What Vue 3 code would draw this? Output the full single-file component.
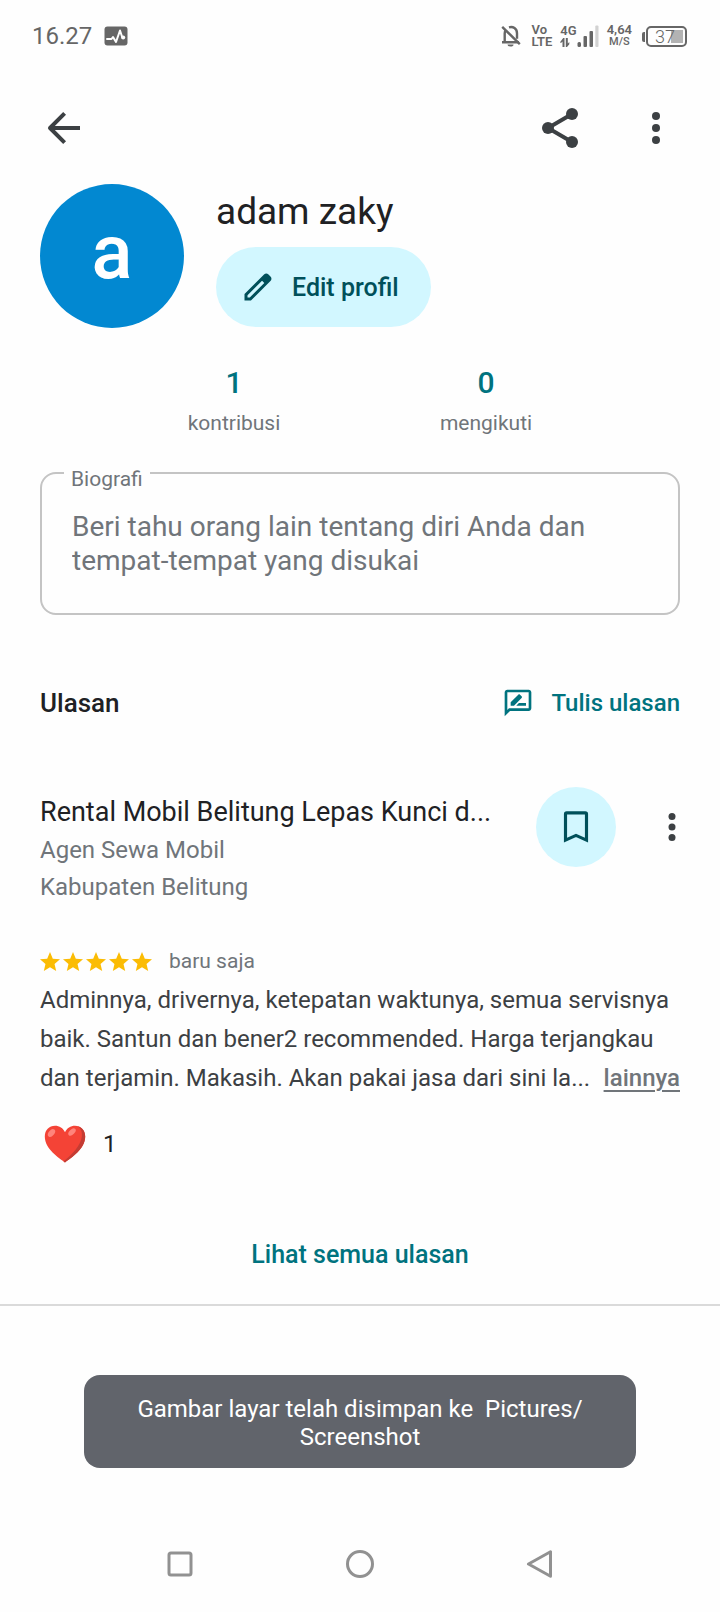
<script setup>
import { ref } from 'vue'

const bio = ref('')
const stats = [
  { value: '1', label: 'kontribusi' },
  { value: '0', label: 'mengikuti' },
]
const reviewLines = [
  'Adminnya, drivernya, ketepatan waktunya, semua servisnya',
  'baik. Santun dan bener2 recommended. Harga terjangkau',
]
</script>

<template>
  <div class="screen">
    <div class="status">
      <span class="time">16.27</span>
      <svg class="pulse" viewBox="0 0 24 20" aria-hidden="true">
        <rect x="0.5" y="0.5" width="23" height="19" rx="3" fill="#666" />
        <path d="M3 13h4.500l1.500-2 3 5 4-11.500 2.500 7.500" fill="none" stroke="#fefefe" stroke-width="2" stroke-linejoin="round" stroke-linecap="round" />
        <circle cx="19.200" cy="11.500" r="2" fill="#fefefe" />
      </svg>
      <div class="indicators">
        <svg class="bell" viewBox="0 0 20 22" aria-hidden="true">
          <path d="M1 17.200h17M3.700 17V8.500c0-1.300.400-2.500 1.100-3.500M8 2.300c4-1.200 8 1.200 8 6v5.500" fill="none" stroke="#666" stroke-width="2.400" />
          <path d="M1.200 1.800l17.600 17.400" stroke="#666" stroke-width="2.400" />
          <path d="M6.500 19.500h6a3 2 0 0 1-6 0z" fill="#666" />
        </svg>
        <div class="stack volte"><span>Vo</span><span>LTE</span></div>
        <div class="cell">
          <div class="stack net">
            <span>4G</span>
            <svg class="updown" viewBox="0 0 10 9" aria-hidden="true">
              <path d="M0 4.200L3.200 0h1.300v9H2.500V3.600L1 5zM5.800 0h2v5.400L9.300 4v2.200L7 9H5.800z" fill="#666" />
            </svg>
          </div>
          <svg class="bars" viewBox="0 0 22 22" aria-hidden="true">
            <rect x="0.500" y="17" width="3.500" height="5" rx="1.500" fill="#666" />
            <rect x="6.500" y="11" width="3.500" height="11" rx="1" fill="#666" />
            <rect x="12.500" y="6" width="3.500" height="16" rx="1" fill="#666" />
            <rect x="18.300" y="0.500" width="3.200" height="21.500" rx="1" fill="#d2d2d2" />
          </svg>
        </div>
        <div class="stack speed"><span>4,64</span><span class="unit">M/S</span></div>
        <div class="battery"><span>37</span></div>
      </div>
    </div>

    <header class="toolbar">
      <button class="icon-btn" type="button" aria-label="Kembali">
        <svg class="i48" viewBox="0 0 24 24"><path d="M20 12H5M12.300 4.700L5 12l7.300 7.300" fill="none" stroke="#3c4043" stroke-width="2" stroke-linejoin="round" /></svg>
      </button>
      <button class="icon-btn push" type="button" aria-label="Bagikan">
        <svg class="i48" viewBox="0 0 24 24" fill="#3c4043">
          <path d="M18 5L6 12l12 7" fill="none" stroke="#3c4043" stroke-width="2" />
          <circle cx="18" cy="5" r="3" /><circle cx="6" cy="12" r="3" /><circle cx="18" cy="19" r="3" />
        </svg>
      </button>
      <button class="icon-btn" type="button" aria-label="Opsi lainnya">
        <svg class="i48" viewBox="0 0 24 24" fill="#3c4043"><circle cx="12" cy="6" r="2" /><circle cx="12" cy="12" r="2" /><circle cx="12" cy="18" r="2" /></svg>
      </button>
    </header>

    <main>
      <section class="profile">
        <div class="avatar">a</div>
        <div class="who">
          <h1>adam zaky</h1>
          <button class="edit" type="button">
            <svg class="i36" viewBox="0 0 24 24" fill="#00505a" aria-hidden="true">
              <path fill-rule="evenodd" d="M3 16.700L16 3.700c.9-.9 2.100-.9 3 0l1.300 1.300c.9.9.9 2.100 0 3L7.300 21H3zM5 17.500V19h1.500L16.200 9.300l-1.500-1.500z" />
            </svg>
            <span>Edit profil</span>
          </button>
        </div>
      </section>

      <dl class="stats">
        <div v-for="s in stats" :key="s.label" class="stat">
          <dt>{{ s.label }}</dt>
          <dd>{{ s.value }}</dd>
        </div>
      </dl>

      <fieldset class="bio">
        <legend><label for="bio">Biografi</label></legend>
        <textarea id="bio" v-model="bio" rows="2" placeholder="Beri tahu orang lain tentang diri Anda dan tempat-tempat yang disukai"></textarea>
      </fieldset>

      <section class="reviews">
        <div class="reviews-head">
          <h2>Ulasan</h2>
          <button class="write" type="button">
            <svg class="i32" viewBox="0 0 24 24" fill="#00737f" aria-hidden="true">
              <path fill-rule="evenodd" d="M4 2h16c1.100 0 2 .9 2 2v12c0 1.100-.9 2-2 2H6l-4 4V4c0-1.100.9-2 2-2zm0 2v13.200L5.200 16H20V4z" />
              <path d="M6.500 14v-2.500l5.700-5.700c.4-.4.900-.4 1.300 0l1.200 1.200c.4.4.4.900 0 1.300L9 14zM10.700 14l2-2H18v2z" />
            </svg>
            <span>Tulis ulasan</span>
          </button>
        </div>

        <article>
          <div class="place">
            <div class="place-text">
              <h3>Rental Mobil Belitung Lepas Kunci d...</h3>
              <p>Agen Sewa Mobil</p>
              <p>Kabupaten Belitung</p>
            </div>
            <button class="save" type="button" aria-label="Simpan">
              <svg class="i42" viewBox="0 0 24 24"><path d="M6 4.600c0-.4.300-.7.700-.7h10.600c.4 0 .7.300.7.700v14.900l-6-2.700-6 2.700z" fill="none" stroke="#00505a" stroke-width="1.800" /></svg>
            </button>
            <button class="icon-btn more" type="button" aria-label="Opsi ulasan">
              <svg class="i42" viewBox="0 0 24 24" fill="#3c4043"><circle cx="12" cy="6" r="2" /><circle cx="12" cy="12" r="2" /><circle cx="12" cy="18" r="2" /></svg>
            </button>
          </div>

          <div class="rating">
            <div class="stars" role="img" aria-label="5 bintang">
              <svg v-for="n in 5" :key="n" viewBox="2 2 20 19" fill="#fbbc04"><path d="M12 17.270L18.180 21l-1.640-7.030L22 9.240l-7.190-.610L12 2 9.190 8.630 2 9.240l5.460 4.730L5.820 21z" /></svg>
            </div>
            <span>baru saja</span>
          </div>

          <div class="text">
            <div v-for="line in reviewLines" :key="line">{{ line }}</div>
            <div class="last">
              <span>dan terjamin. Makasih. Akan pakai jasa dari sini la...</span>
              <a href="#">lainnya</a>
            </div>
          </div>

          <button class="react" type="button">
            <svg class="heart" viewBox="0 0 42 38" aria-hidden="true">
              <path d="M21 37.500C15 33 .8 24 .8 11.500.8 5 5.200.8 11 .8c4.500 0 8 2.400 10 6.400C23 3.200 26.500.8 31 .8c5.800 0 10.200 4.200 10.200 10.700C41.200 24 27 33 21 37.500z" fill="#f44336" />
              <path d="M33.500 1.200c3.500 2 5 6 4.300 10.500C36.500 21 28 29.500 19.500 36.400l1.500 1.100C27 33 41.200 24 41.200 11.500c0-5.500-3.200-9.500-7.700-10.300z" fill="#c33c33" />
              <ellipse cx="7.500" cy="8" rx="4.500" ry="2.800" fill="#ff847b" transform="rotate(-50 7.500 8)" />
              <ellipse cx="28" cy="7" rx="4.500" ry="2.600" fill="#ff847b" transform="rotate(-45 28 7)" />
            </svg>
            <span>1</span>
          </button>
        </article>

        <a class="all" href="#">Lihat semua ulasan</a>
      </section>
    </main>

    <div class="toast" role="status">Gambar layar telah disimpan ke&nbsp; Pictures/<br>Screenshot</div>

    <nav class="sysnav">
      <button type="button" aria-label="Aplikasi terbaru"><svg viewBox="0 0 28 28"><rect x="3" y="3" width="22" height="22" rx="2" /></svg></button>
      <button type="button" aria-label="Beranda"><svg viewBox="0 0 28 28"><circle cx="14" cy="14" r="12.500" /></svg></button>
      <button type="button" aria-label="Kembali ke layar sebelumnya"><svg viewBox="0 0 28 28"><path d="M24.500 1.800v24.400L2.500 14z" /></svg></button>
    </nav>
  </div>
</template>

<style>
body { margin: 0; background: #fefefe; }
</style>

<style scoped>
.screen {
  min-height: 100vh;
  display: flex;
  flex-direction: column;
  background: #fefefe;
  color: #202124;
  font-family: Roboto, "Liberation Sans", sans-serif;
}
button {
  border: 0;
  padding: 0;
  background: none;
  font: inherit;
  color: inherit;
  display: flex;
  align-items: center;
}
h1, h2, h3, p, dl, dd { margin: 0; font-weight: 400; }
svg { display: block; flex: none; }
.i32 { width: 32px; height: 32px; }
.i36 { width: 36px; height: 36px; }
.i42 { width: 42px; height: 42px; }
.i48 { width: 48px; height: 48px; }

.status {
  display: flex;
  align-items: center;
  height: 72px;
  padding: 0 33px 0 32px;
  color: #666;
}
.time { font-size: 24px; line-height: 28px; }
.pulse { width: 24px; height: 20px; margin-left: 12px; }
.indicators { display: flex; align-items: center; gap: 8px; margin-left: auto; }
.bell { width: 20px; height: 22px; }
.stack { display: flex; flex-direction: column; font-size: 13px; font-weight: 600; line-height: 12px; }
.volte { margin-left: 3px; }
.net { gap: 1px; }
.updown { width: 10px; height: 9px; }
.cell { display: flex; align-items: center; }
.bars { width: 22px; height: 22px; }
.speed { align-items: center; }
.unit { font-size: 11px; font-weight: 500; }
.battery {
  position: relative;
  box-sizing: border-box;
  width: 41px;
  height: 21px;
  margin-left: 6px;
  padding: 0 7px;
  border: 2px solid #666;
  border-radius: 5px;
  background: linear-gradient(#b3b3b3, #b3b3b3) 23px 2px / 12px 13px no-repeat;
  font-size: 18px;
  font-weight: 300;
  line-height: 18px;
}
.battery::before {
  content: "";
  position: absolute;
  left: -6px;
  top: 4px;
  width: 3px;
  height: 10px;
  border-radius: 2px 0 0 2px;
  background: #666;
}

.toolbar { display: flex; align-items: center; gap: 48px; height: 112px; padding: 0 40px; }
.push { margin-left: auto; }

main { display: flex; flex-direction: column; padding-bottom: 25px; border-bottom: 2px solid #dadada; }
.profile { display: flex; gap: 32px; padding: 0 40px; }
.avatar {
  width: 144px;
  height: 144px;
  flex: none;
  border-radius: 50%;
  background: #0288d1;
  color: #fff;
  font-size: 76px;
  font-weight: 500;
  line-height: 136px;
  text-align: center;
}
.who { display: flex; flex-direction: column; align-items: flex-start; padding-top: 4px; }
h1 { font-size: 37px; line-height: 48px; margin-bottom: 11px; }
.edit {
  height: 80px;
  padding: 0 32px 0 24px;
  gap: 16px;
  border-radius: 40px;
  background: #d2f7ff;
  color: #00505a;
  font-size: 25px;
  font-weight: 500;
}

.stats { display: grid; grid-template-columns: 1fr 1fr; padding: 39px 15% 0; }
.stat { display: flex; flex-direction: column-reverse; align-items: center; }
dt { color: #70757a; font-size: 21px; line-height: 32px; margin-top: 8px; }
dd { color: #00737f; font-size: 30px; font-weight: 500; line-height: 32px; }

.bio {
  margin: 16px 40px 0;
  padding: 0 30px 35px;
  border: 2px solid #c4c4c4;
  border-radius: 16px;
  min-width: 0;
}
.bio legend { margin-left: -8px; padding: 12px 7px 0; color: #70757a; font-size: 21px; line-height: 24px; }
textarea {
  display: block;
  width: 100%;
  padding: 0;
  border: 0;
  outline: 0;
  resize: none;
  overflow: hidden;
  background: none;
  margin-top: 19px;
  color: #202124;
  font: 28px/34px Roboto, "Liberation Sans", sans-serif;
}
textarea::placeholder { color: #70757a; opacity: 1; }

.reviews { display: flex; flex-direction: column; padding: 64px 40px 0; }
.reviews-head { display: flex; align-items: center; justify-content: space-between; height: 48px; }
h2 { font-size: 26px; font-weight: 500; }
.write { gap: 17px; color: #00737f; font-size: 24px; font-weight: 500; }

.place { display: flex; align-items: flex-start; margin-top: 60px; }
.place-text { flex: 1; min-width: 0; padding-top: 5px; }
h3 { font-size: 27px; line-height: 40px; white-space: nowrap; }
.place-text p { color: #70757a; font-size: 24px; line-height: 37px; }
.save { width: 80px; height: 80px; justify-content: center; border-radius: 50%; background: #d2f7ff; }
.more { height: 80px; margin: 0 -13px 0 35px; }

.rating { display: flex; align-items: center; gap: 17px; margin-top: 39px; height: 32px; color: #70757a; font-size: 21px; }
.stars { display: flex; gap: 3px; }
.stars svg { width: 20px; height: 19px; }
.text { margin-top: 4px; color: #3c4043; font-size: 24px; line-height: 39px; white-space: nowrap; }
.last { display: flex; justify-content: space-between; }
.text a { color: #70757a; font-weight: 500; text-decoration: underline; text-decoration-thickness: 2px; text-underline-offset: 4px; }
.react { gap: 17px; margin-top: 22px; padding-left: 4px; height: 48px; font-size: 24px; }
.heart { width: 42px; height: 38px; }
.all { align-self: center; margin-top: 63px; line-height: 48px; color: #00737f; font-size: 25px; font-weight: 500; text-decoration: none; }

.toast {
  margin: 69px 84px 0;
  padding: 20px 24px 17px;
  border-radius: 16px;
  background: #61646b;
  color: #fff;
  font-size: 24px;
  line-height: 28px;
  text-align: center;
}
.sysnav { display: grid; grid-template-columns: repeat(3, 1fr); margin-top: auto; padding: 0 12.5%; height: 96px; }
.sysnav button { justify-content: center; }
.sysnav svg { width: 28px; height: 28px; fill: none; stroke: #919191; stroke-width: 3; stroke-linejoin: round; }
</style>
